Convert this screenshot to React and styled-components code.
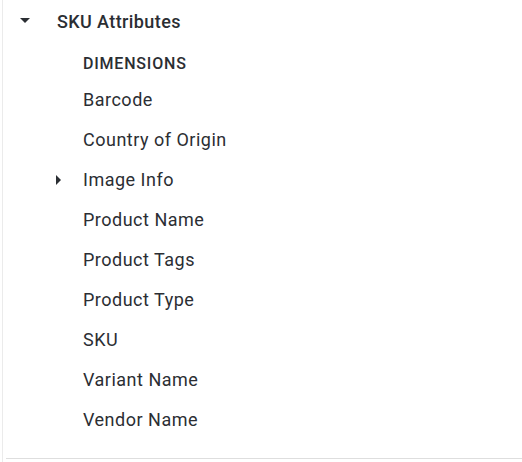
import React from "react";
import styled, { createGlobalStyle } from "styled-components";

const Global = createGlobalStyle`
  html, body { margin: 0; padding: 0; background: #ffffff; }
  body { font-family: Roboto, "Liberation Sans", Arial, sans-serif; color: #2b2e33; }
`;

const Page = styled.div`
  width: 522px;
  height: 462px;
  overflow: hidden;
  display: flex;
  flex-direction: column;
  padding-left: 2px;
  box-sizing: border-box;
`;

const Panel = styled.div`
  flex: 1;
  border-left: 1px solid #ebebeb;
  padding-top: 2px;
  display: flex;
  flex-direction: column;
`;

const Tree = styled.ul`
  list-style: none;
  margin: 0;
  padding: 0;
`;

const Row = styled.li`
  display: flex;
  align-items: center;
  height: 40px;
  padding-left: ${(p) => p.$pad}px;
`;

const Slot = styled.span`
  width: 24px;
  height: 24px;
  flex: none;
  display: flex;
  align-items: center;
  justify-content: center;
  color: #2b2e33;
`;

const Label = styled.span`
  margin-left: ${(p) => p.$gap}px;
  font-size: 18px;
  line-height: 24px;
  letter-spacing: ${(p) => (p.$strong ? 0.4 : 0.5)}px;
  font-weight: ${(p) => (p.$strong ? 500 : 400)};
  color: #2b2e33;
  white-space: nowrap;
`;

const Section = styled.li`
  padding: 13px 0 7px 80px;
  font-size: 16px;
  line-height: 18px;
  letter-spacing: 0.8px;
  font-weight: 500;
  text-transform: uppercase;
  color: #2b2e33;
`;

const Divider = styled.div`
  height: 1px;
  background: #dedede;
  margin: 18px 0 0 3px;
`;

const CaretDown = () => (
  <svg width="10" height="5" viewBox="0 0 10 5" style={{ marginBottom: 3 }}>
    <path d="M0 0 L10 0 L5 5 Z" fill="currentColor" />
  </svg>
);

const CaretRight = () => (
  <svg width="5" height="10" viewBox="0 0 5 10">
    <path d="M0 0 L5 5 L0 10 Z" fill="currentColor" />
  </svg>
);

const items = [
  { name: "Barcode" },
  { name: "Country of Origin" },
  { name: "Image Info", expandable: true },
  { name: "Product Name" },
  { name: "Product Tags" },
  { name: "Product Type" },
  { name: "SKU" },
  { name: "Variant Name" },
  { name: "Vendor Name" },
];

export default function App() {
  return (
    <>
      <Global />
      <Page>
        <Panel>
          <Tree>
            <Row $pad={10}>
              <Slot>
                <CaretDown />
              </Slot>
              <Label $gap={20} $strong>
                SKU Attributes
              </Label>
            </Row>
            <Section>Dimensions</Section>
            {items.map((it) => (
              <Row key={it.name} $pad={43}>
                <Slot>{it.expandable ? <CaretRight /> : null}</Slot>
                <Label $gap={13}>{it.name}</Label>
              </Row>
            ))}
          </Tree>
          <Divider />
        </Panel>
      </Page>
    </>
  );
}
